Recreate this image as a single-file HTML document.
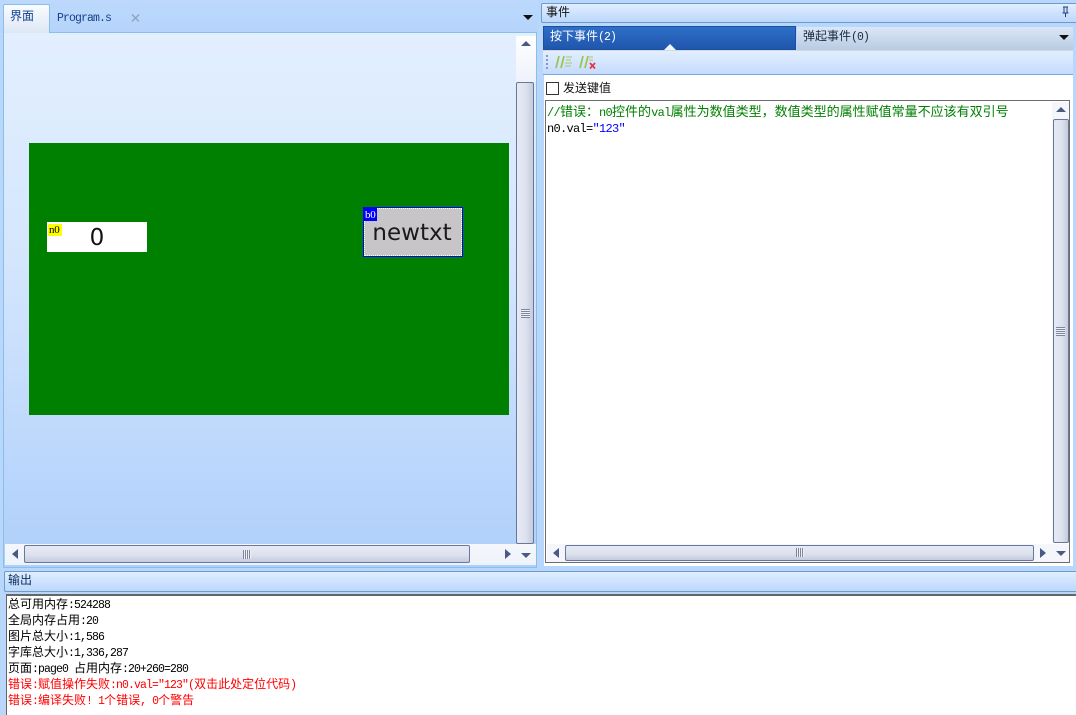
<!DOCTYPE html>
<html lang="zh">
<head>
<meta charset="utf-8">
<style>
html,body{margin:0;padding:0;width:1076px;height:715px;overflow:hidden;background:#b9d6fb}
body{position:relative;font-family:"Liberation Mono","WenQuanYi Zen Hei","Noto Sans CJK SC",monospace;font-size:12px;color:#000}
div{position:absolute;box-sizing:border-box}
i{font-style:normal;font-size:11.5px;letter-spacing:-.9px;font-family:"Liberation Mono",monospace}
.ed{font-size:13px}
.ed i{font-size:12px;letter-spacing:-.7px}
.t{white-space:nowrap;line-height:16px;height:16px}
.thumbv{background:linear-gradient(90deg,#e6eaf4 0%,#dde2ee 55%,#c4cbdc 100%);border:1px solid #69769e;border-radius:2px}
.thumbh{background:linear-gradient(180deg,#e6eaf4 0%,#dde2ee 55%,#c4cbdc 100%);border:1px solid #69769e;border-radius:2px}
.tri{width:0;height:0;border-style:solid;border-color:transparent}
.gv{background:repeating-linear-gradient(180deg,#7c869e 0 1px,#eef0f6 1px 2px)}
.gh{background:repeating-linear-gradient(90deg,#7c869e 0 1px,#eef0f6 1px 2px)}
</style>
</head>
<body>
<!-- left pane -->
<div style="left:0;top:0;width:538px;height:33px;background:linear-gradient(180deg,#bcd9fc,#b6d4fb)"></div>
<div style="left:3px;top:32px;width:534px;height:536px;border:1px solid #86c0ea;background:linear-gradient(180deg,#e3efff 0%,#d3e5fd 45%,#aecffb 100%)"></div>
<div style="left:3px;top:4px;width:47px;height:29px;border:1px solid #86c0ea;border-bottom:none;border-radius:2px 2px 0 0;background:linear-gradient(180deg,#fafcff,#dde7f5)"></div>
<div class="t" style="left:10px;top:9px;color:#0f3f8f">界面</div>
<div class="t" style="left:57px;top:10px;color:#15418e"><i>Program.s</i></div>
<svg style="position:absolute;left:131px;top:14px" width="9" height="8"><path d="M1 0.5L8 7.5M8 0.5L1 7.5" stroke="#8ea3c4" stroke-width="1.4"/></svg>
<div class="tri" style="left:523px;top:15px;border-width:5px 5px 0 5px;border-top-color:#111"></div>

<!-- left scrollbars -->
<div style="left:516px;top:36px;width:20px;height:46px;background:linear-gradient(180deg,#fff,#eef2fb)"></div>
<div class="tri" style="left:521px;top:41px;border-width:0 5px 5px 5px;border-bottom-color:#4a5a86"></div>
<div class="thumbv" style="left:516px;top:82px;width:18px;height:462px"></div>
<div class="gv" style="left:521px;top:309px;width:9px;height:9px"></div>
<div style="left:5px;top:544px;width:531px;height:21px;background:linear-gradient(180deg,#f5f7fc,#eef2fa)"></div>
<div class="tri" style="left:12px;top:549px;border-width:5px 6px 5px 0;border-right-color:#4a5a86"></div>
<div class="thumbh" style="left:24px;top:545px;width:446px;height:18px"></div>
<div class="gh" style="left:243px;top:550px;width:8px;height:9px"></div>
<div class="tri" style="left:505px;top:549px;border-width:5px 0 5px 6px;border-left-color:#4a5a86"></div>
<div class="tri" style="left:521px;top:553px;border-width:5px 5px 0 5px;border-top-color:#4a5a86"></div>

<!-- canvas -->
<div style="left:29px;top:143px;width:480px;height:272px;background:#008000"></div>
<div style="left:47px;top:222px;width:100px;height:30px;background:#fff"></div>
<div style="left:48px;top:224px;width:14px;height:12px;background:#ff0"></div>
<div class="t" style="left:49px;top:222px"><i style="font-family:'Liberation Serif',serif;font-size:11px;letter-spacing:-.2px">n0</i></div>
<div style="left:47px;top:222px;width:100px;height:30px;line-height:32px;text-align:center;font-family:'DejaVu Sans',sans-serif;font-size:23px;color:#111">0</div>
<div style="left:363px;top:207px;width:100px;height:50px;background:#c8c5c9;border:1px solid #00f;outline:1px dotted #fff;outline-offset:-2px"></div>
<div style="left:364px;top:208px;width:13px;height:13px;background:#00f"></div>
<div class="t" style="left:365px;top:207px;color:#fff"><i style="font-family:'Liberation Serif',serif;font-size:11px;letter-spacing:-.2px">b0</i></div>
<div style="left:362px;top:207px;width:100px;height:50px;line-height:53px;text-align:center;font-family:'DejaVu Sans',sans-serif;font-size:23px;color:#1a1a1a;white-space:nowrap">newtxt</div>

<!-- right pane -->
<div style="left:541px;top:3px;width:535px;height:20px;border:1px solid #6d9ccc;border-right:none;border-radius:2px 0 0 2px;background:linear-gradient(180deg,#e0eeff,#bcd8fc)"></div>
<div class="t" style="left:546px;top:5px;color:#111">事件</div>
<svg style="position:absolute;left:1060px;top:6px" width="10" height="12"><path d="M3 1H8M4 1V7M7 1V7M2.5 7H8.5M5.5 7V11" stroke="#1e3f78" stroke-width="1" fill="none"/></svg>

<div style="left:541px;top:24px;width:535px;height:543px;background:#b9d6fb"></div>
<div style="left:797px;top:27px;width:276px;height:23px;background:linear-gradient(180deg,#dbe7f6,#b9cbe2)"></div>
<div style="left:543px;top:26px;width:253px;height:24px;background:linear-gradient(180deg,#2e6fc8,#1f56ab);border:1px solid #1d4f9f"></div>
<div class="tri" style="left:664px;top:44px;border-width:0 6px 6px 6px;border-bottom-color:#f2f7ff"></div>
<div class="t" style="left:550px;top:29px;color:#fff">按下事件<i style="letter-spacing:-.9px">(2)</i></div>
<div class="t" style="left:803px;top:29px;color:#1b2b44">弹起事件<i>(0)</i></div>
<div class="tri" style="left:1059px;top:35px;border-width:5px 5px 0 5px;border-top-color:#111"></div>

<div style="left:543px;top:50px;width:530px;height:25px;background:linear-gradient(180deg,#e2eeff,#c5dcfd);border-bottom:1px solid #7fa6e4;border-top:1px solid #cfd9e6"></div>
<svg style="position:absolute;left:544px;top:53px" width="56" height="18">
<g fill="#7d9cc6"><rect x="2" y="2" width="2" height="2"/><rect x="2" y="6" width="2" height="2"/><rect x="2" y="10" width="2" height="2"/><rect x="2" y="14" width="2" height="2"/></g>
<path d="M12 15L15 3M17 15L20 3M36 15L39 3M41 15L44 3" stroke="#9cc34a" stroke-width="1.7" fill="none"/>
<path d="M22 4H28M22 7H27M21 10H28M21 13H27M45 4H49M45 7H49" stroke="#a8c86a" stroke-width="1" fill="none"/>
<path d="M46 10L51 15.500M51 10L46 15.500" stroke="#e8344a" stroke-width="1.700" fill="none"/>
</svg>

<div style="left:544px;top:75px;width:529px;height:491px;background:#fff"></div>
<div style="left:546px;top:82px;width:13px;height:13px;border:1px solid #333;background:#fff"></div>
<div class="t" style="left:563px;top:81px;color:#111">发送键值</div>

<div style="left:545px;top:100px;width:525px;height:463px;border:1px solid #6e6e6e;background:#fff"></div>
<div class="t ed" style="left:547px;top:105px;color:#008000"><i>//</i>错误：<i>n0</i>控件的<i>val</i>属性为数值类型，数值类型的属性赋值常量不应该有双引号</div>
<div class="t ed" style="left:547px;top:121px"><i>n0.val=</i><span style="color:#00f"><i>"123"</i></span></div>

<div style="left:1052px;top:102px;width:17px;height:441px;background:#f4f6fb"></div>
<div class="tri" style="left:1056px;top:107px;border-width:0 5px 5px 5px;border-bottom-color:#4a5a86"></div>
<div class="thumbv" style="left:1053px;top:119px;width:16px;height:424px"></div>
<div class="gv" style="left:1056px;top:327px;width:9px;height:9px"></div>
<div style="left:547px;top:544px;width:522px;height:18px;background:#f4f6fb"></div>
<div class="tri" style="left:553px;top:548px;border-width:5px 6px 5px 0;border-right-color:#4a5a86"></div>
<div class="thumbh" style="left:565px;top:545px;width:469px;height:16px"></div>
<div class="gh" style="left:796px;top:548px;width:8px;height:9px"></div>
<div class="tri" style="left:1040px;top:548px;border-width:5px 0 5px 6px;border-left-color:#4a5a86"></div>
<div class="tri" style="left:1056px;top:551px;border-width:5px 5px 0 5px;border-top-color:#4a5a86"></div>

<!-- output -->
<div style="left:0;top:568px;width:1076px;height:147px;background:#b9d6fb"></div>
<div style="left:4px;top:571px;width:1072px;height:21px;border:1px solid #6d9ccc;border-right:none;border-radius:2px 0 0 2px;background:linear-gradient(180deg,#e0eeff,#bcd8fc)"></div>
<div class="t" style="left:8px;top:573px;color:#0f3060">输出</div>
<div style="left:6px;top:594px;width:1070px;height:121px;background:#fff;border-left:1px solid #666;border-top:2px solid #666"></div>
<div class="t" style="left:8px;top:597px">总可用内存<i>:524288</i></div>
<div class="t" style="left:8px;top:613px">全局内存占用<i>:20</i></div>
<div class="t" style="left:8px;top:629px">图片总大小<i>:1,586</i></div>
<div class="t" style="left:8px;top:645px">字库总大小<i>:1,336,287</i></div>
<div class="t" style="left:8px;top:661px">页面<i>:page0 </i>占用内存<i>:20+260=280</i></div>
<div class="t" style="left:8px;top:677px;color:#f00">错误<i>:</i>赋值操作失败<i>:n0.val="123"(</i>双击此处定位代码<i>)</i></div>
<div class="t" style="left:8px;top:693px;color:#f00">错误<i>:</i>编译失败<i>! 1</i>个错误<i>, 0</i>个警告</div>
</body>
</html>
